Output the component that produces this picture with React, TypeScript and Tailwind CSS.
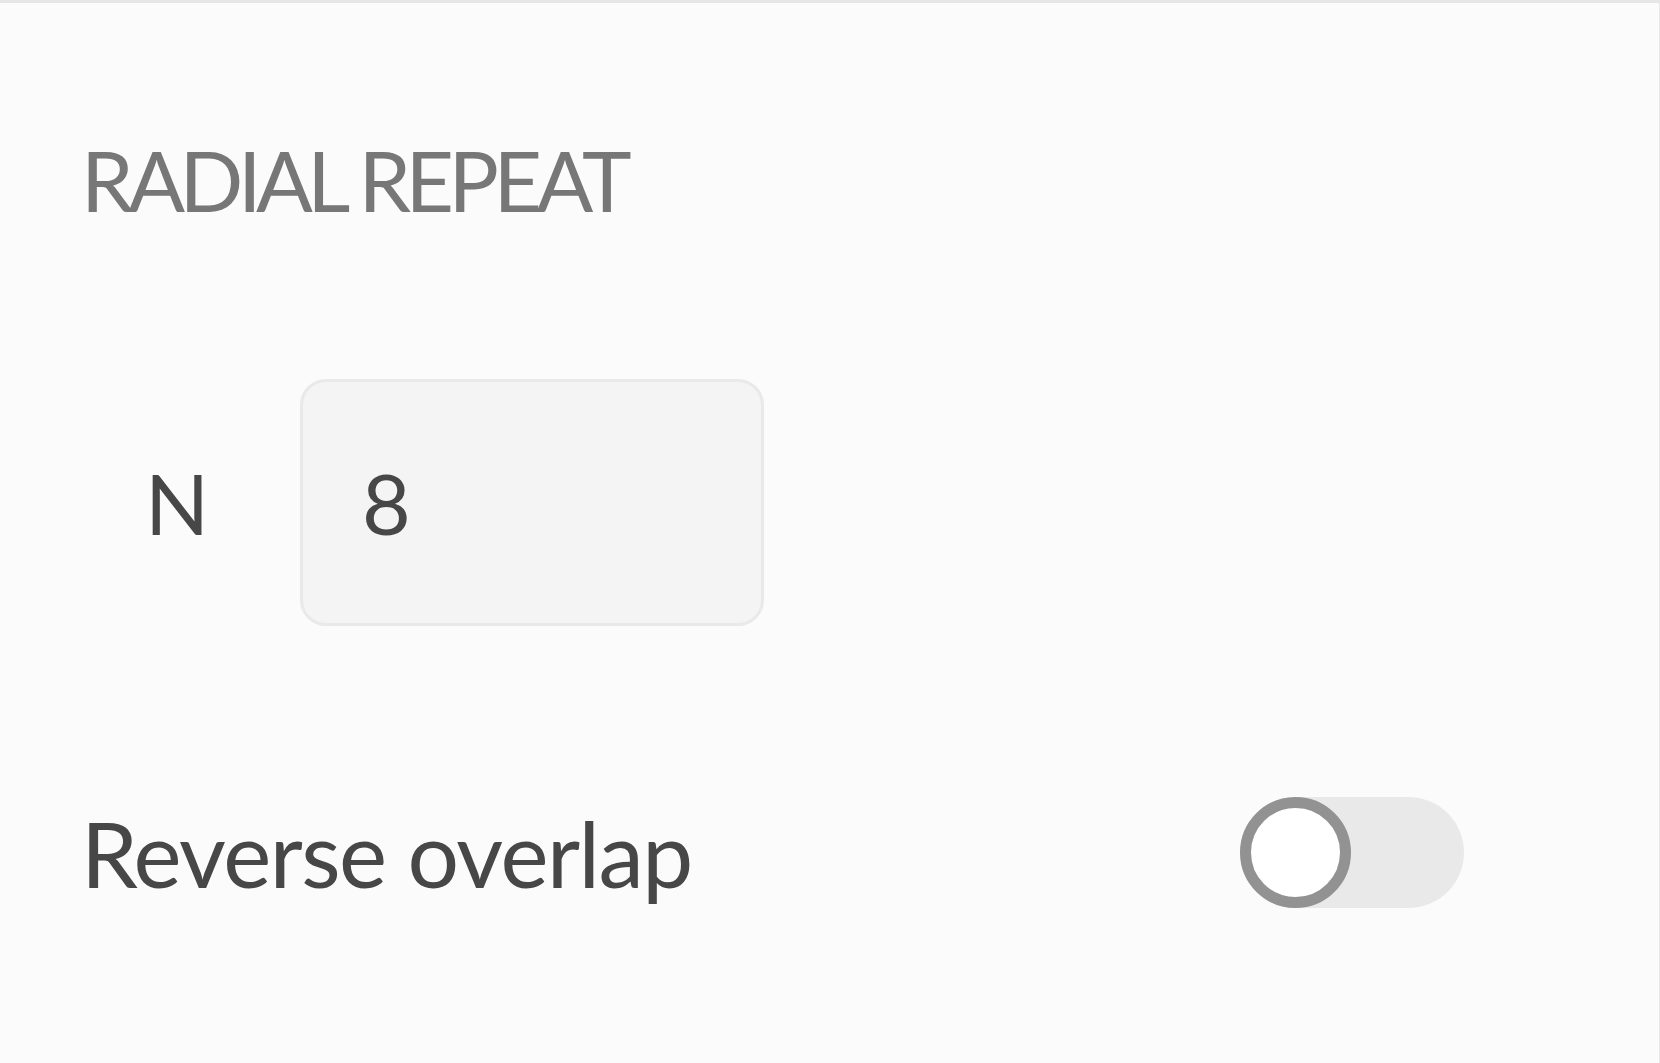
import { useState } from "react";

type ToggleProps = {
  checked: boolean;
  onChange: (v: boolean) => void;
};

function Toggle({ checked, onChange }: ToggleProps) {
  return (
    <button
      type="button"
      onClick={() => onChange(!checked)}
      className={`relative flex h-[111px] w-[224px] items-center rounded-full ${checked ? "bg-[#cfcfcf]" : "bg-[#e9e9e9]"}`}
    >
      <span
        className={`h-[111px] w-[111px] rounded-full border-[11px] border-[#929292] bg-white ${checked ? "ml-[113px]" : "ml-0"}`}
      />
    </button>
  );
}

function App() {
  const [reverse, setReverse] = useState(false);

  return (
    <div
      className="min-h-screen border-t-[3px] border-r border-[#e6e6e6] bg-[#fbfbfb]"
      style={{ fontFamily: 'Lato, "Open Sans", sans-serif' }}
    >
      <div className="pl-[81px] pr-[195px] pt-[135px]">
        <h2 className="text-[84px] leading-none tracking-[-5.5px] text-[#777777]">RADIAL REPEAT</h2>

        <div className="mt-[157px] flex items-center">
          <span className="w-[219px] pl-[64px] text-[84px] leading-none text-[#474747]">N</span>
          <div className="flex h-[247px] w-[464px] items-center rounded-[26px] border-[3px] border-[#e9e9e9] bg-[#f4f4f4] pl-[59px] text-[84px] leading-none text-[#474747]">
            8
          </div>
        </div>

        <div className="mt-[171px] flex items-center justify-between">
          <span className="text-[91px] leading-none tracking-[-1.5px] text-[#474747]">Reverse overlap</span>
          <Toggle checked={reverse} onChange={setReverse} />
        </div>
      </div>
    </div>
  );
}

export default App;
